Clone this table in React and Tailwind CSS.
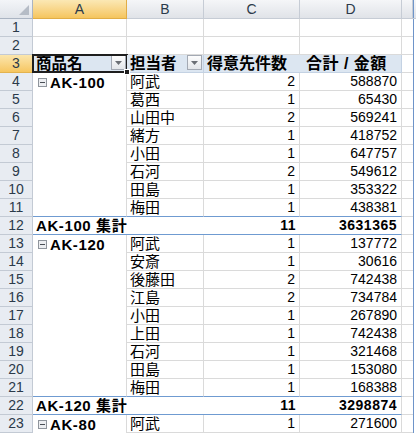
import React from "react";

const COLS = ["A", "B", "C", "D"];

// rows 4..23 of the pivot
const DATA = [
  { item: "AK-100", name: "阿武", n: 2, sum: 588870 },
  { name: "葛西", n: 1, sum: 65430 },
  { name: "山田中", n: 2, sum: 569241 },
  { name: "緒方", n: 1, sum: 418752 },
  { name: "小田", n: 1, sum: 647757 },
  { name: "石河", n: 2, sum: 549612 },
  { name: "田島", n: 1, sum: 353322 },
  { name: "梅田", n: 1, sum: 438381, last: true },
  { total: "AK-100 集計", n: 11, sum: 3631365 },
  { item: "AK-120", name: "阿武", n: 1, sum: 137772 },
  { name: "安斎", n: 1, sum: 30616 },
  { name: "後藤田", n: 2, sum: 742438 },
  { name: "江島", n: 2, sum: 734784 },
  { name: "小田", n: 1, sum: 267890 },
  { name: "上田", n: 1, sum: 742438 },
  { name: "石河", n: 1, sum: 321468 },
  { name: "田島", n: 1, sum: 153080 },
  { name: "梅田", n: 1, sum: 168388, last: true },
  { total: "AK-120 集計", n: 11, sum: 3298874 },
  { item: "AK-80", name: "阿武", n: 1, sum: 271600 },
];

const FONT = { fontFamily: '"Liberation Sans", "Noto Sans CJK JP", sans-serif' };

const cell = "h-[18px] flex items-center whitespace-nowrap text-[14px] leading-[17px] text-black";

const Dropdown = () => (
  <div className="absolute right-[1px] top-0 h-[15px] w-[15px] border border-[#a3a9b3] bg-gradient-to-b from-[#fdfdfd] to-[#e3e6ea] flex items-center justify-center">
    <svg width="7" height="4" viewBox="0 0 7 4"><path d="M0 0h7L3.5 4z" fill="#6b6f75" /></svg>
  </div>
);

const Collapse = () => (
  <span className="mr-[3px] ml-[5px] inline-flex h-[9px] w-[9px] items-center justify-center border border-[#8f959c] bg-[#eceef1]">
    <span className="h-[1px] w-[5px] bg-[#4a4f55]" />
  </span>
);

const RowNum = ({ n, active }) => (
  <div className={`h-[18px] flex items-center justify-center border-b border-r text-[14px] text-[#2b3a4a] ${active ? "bg-gradient-to-b from-[#fbe6ac] to-[#f6c660] border-[#e3b34f]" : "bg-[#e8ecf2] border-[#c3cad4]"}`}>
    {n}
  </div>
);

const EmptyE = () => (
  <div className="h-[18px] flex">
    <div className="w-[11px] border-b border-[#dadada]" />
    <div className="w-[1px] bg-[#6e94c9]" />
    <div className="flex-1" />
  </div>
);

export default function App() {
  return (
    <div className="h-[433px] w-[416px] overflow-hidden bg-white select-none" style={FONT}>
      <div className="grid grid-cols-[33px_94px_77px_96px_102px_1fr]">
        {/* column headers */}
        <div className="relative h-[19px] border-b border-r border-[#aab4c2] bg-gradient-to-b from-[#f3f5f8] to-[#dfe3e9]">
          <svg className="absolute right-[3px] bottom-[3px]" width="10" height="10" viewBox="0 0 10 10"><path d="M10 0v10H0z" fill="#b5bcc6" /></svg>
        </div>
        {COLS.map((c) => (
          <div key={c} className={`h-[19px] flex items-center justify-center border-b border-r text-[14px] text-[#2b3a4a] ${c === "A" ? "bg-gradient-to-b from-[#fbe8b4] to-[#f5c55d] border-[#e1ad46]" : "bg-gradient-to-b from-[#f5f6f8] to-[#e0e3e8] border-[#c6ccd5]"}`}>
            {c}
          </div>
        ))}
        <div className="h-[19px] flex border-b border-[#c6ccd5] bg-gradient-to-b from-[#f5f6f8] to-[#e0e3e8]">
          <div className="w-[11px] border-r border-[#c6ccd5]" />
          <div className="w-[1px] bg-[#6e94c9]" />
        </div>

        {/* rows 1-2 */}
        {[1, 2].map((r) => (
          <React.Fragment key={r}>
            <RowNum n={r} />
            {COLS.map((c) => (
              <div key={c} className={`${cell} border-b border-r border-[#dadada]`} />
            ))}
            <EmptyE />
          </React.Fragment>
        ))}

        {/* row 3: pivot header */}
        <RowNum n={3} active />
        <div className={`${cell} relative bg-[#dce6f1] border-b border-[#c4d2e3] pl-[3px] font-bold text-[15.5px]`}>
          商品名
          <Dropdown />
          <div className="pointer-events-none absolute -left-[1px] -top-[1px] h-[19px] w-[96px] border-2 border-[#1e1e1e]" />
          <div className="absolute -right-[3px] -bottom-[3px] z-10 h-[6px] w-[6px] border border-white bg-[#1e1e1e]" />
        </div>
        <div className={`${cell} relative bg-[#dce6f1] border-b border-r border-[#c4d2e3] pl-[3px] font-bold text-[15.5px]`}>
          担当者
          <Dropdown />
        </div>
        <div className={`${cell} bg-[#dce6f1] border-b border-[#c4d2e3] pl-[3px] font-bold text-[16px]`}>得意先件数</div>
        <div className={`${cell} bg-[#dce6f1] border-b border-r border-[#c4d2e3] pl-[6px] font-bold text-[16px] tracking-[0.5px]`}>合計 / 金額</div>
        <EmptyE />

        {DATA.map((d, i) => {
          const r = i + 4;
          const blueBottom = d.last || d.total;
          const bb = blueBottom ? "border-b border-b-[#6f9bd1]" : "border-b border-b-[#dadada]";
          if (d.total) {
            return (
              <React.Fragment key={r}>
                <RowNum n={r} />
                <div className={`${cell} ${bb} pl-[3px] font-bold text-[15px] tracking-[0.6px] overflow-visible`}>{d.total}</div>
                <div className={`${cell} ${bb}`} />
                <div className={`${cell} ${bb} justify-end pr-[4px] font-bold tracking-[0.5px]`}>{d.n}</div>
                <div className={`${cell} ${bb} border-r border-r-[#dadada] justify-end pr-[4px] font-bold tracking-[0.5px]`}>{d.sum}</div>
                <EmptyE />
              </React.Fragment>
            );
          }
          return (
            <React.Fragment key={r}>
              <RowNum n={r} />
              <div className={`${cell} border-r border-r-[#dadada] ${d.last ? "border-b border-b-[#6f9bd1]" : ""} font-bold text-[15px] tracking-[0.6px]`}>
                {d.item && (
                  <>
                    <Collapse />
                    {d.item}
                  </>
                )}
              </div>
              <div className={`${cell} ${bb} border-r border-r-[#dadada] pl-[3px] text-[15px]`}>{d.name}</div>
              <div className={`${cell} ${bb} border-r border-r-[#dadada] justify-end pr-[4px]`}>{d.n}</div>
              <div className={`${cell} ${bb} border-r border-r-[#dadada] justify-end pr-[4px]`}>{d.sum}</div>
              <EmptyE />
            </React.Fragment>
          );
        })}
      </div>
    </div>
  );
}
